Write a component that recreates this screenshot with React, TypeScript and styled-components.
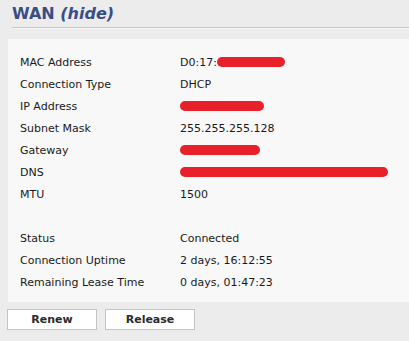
import React from "react";
import styled, { createGlobalStyle } from "styled-components";

const Global = createGlobalStyle`
  html, body { margin: 0; padding: 0; background: #ececec; }
  body { font-family: "DejaVu Sans", Verdana, sans-serif; }
`;

const Page = styled.div`
  width: 409px;
  height: 341px;
  background: #ececec;
  overflow: hidden;
  display: flex;
  flex-direction: column;
`;

const Header = styled.h2`
  margin: 0 0 0 12px;
  padding: 4px 0 4px 0;
  font-family: "DejaVu Sans", Verdana, sans-serif;
  font-size: 16px;
  font-weight: bold;
  color: #3a4d88;
  border-bottom: 1px solid #c8c8c8;
  box-shadow: 0 1px 0 #f6f6f6;
  line-height: 19px;
`;

const Hide = styled.a`
  font-style: italic;
  color: #3a4d88;
  text-decoration: none;
  cursor: pointer;
`;

const Panel = styled.div`
  margin: 11px 0 0 8px;
  background: #f8f8f8;
  padding: 12px 0 9px 12px;
  display: flex;
  flex-direction: column;
`;

const Row = styled.div<{ $gapTop?: boolean }>`
  display: grid;
  grid-template-columns: 160px 1fr;
  height: 22px;
  align-items: center;
  margin-top: ${(p) => (p.$gapTop ? "22px" : "0")};
  font-family: "DejaVu Sans", Verdana, sans-serif;
  font-size: 11px;
  color: #1a1a1a;
`;

const Value = styled.span`
  display: flex;
  align-items: center;
`;

const Redact = styled.span<{ $w: number }>`
  display: inline-block;
  height: 10px;
  width: ${(p) => p.$w}px;
  background: #e8202a;
  border-radius: 5px;
`;

const Buttons = styled.div`
  display: flex;
  gap: 8px;
  margin: 7px 0 0 7px;
`;

const Button = styled.button`
  width: 90px;
  height: 21px;
  background: #ffffff;
  border: 1px solid #c4c4c4;
  font-family: "DejaVu Sans", Verdana, sans-serif;
  font-size: 11px;
  font-weight: bold;
  color: #2a2a2a;
  padding: 0;
`;

export default function App() {
  return (
    <Page>
      <Global />
      <Header>
        WAN <Hide>(hide)</Hide>
      </Header>
      <Panel>
        <Row>
          <span>MAC Address</span>
          <Value>
            D0:17:<Redact $w={68} />
          </Value>
        </Row>
        <Row>
          <span>Connection Type</span>
          <Value>DHCP</Value>
        </Row>
        <Row>
          <span>IP Address</span>
          <Value>
            <Redact $w={84} />
          </Value>
        </Row>
        <Row>
          <span>Subnet Mask</span>
          <Value>255.255.255.128</Value>
        </Row>
        <Row>
          <span>Gateway</span>
          <Value>
            <Redact $w={80} />
          </Value>
        </Row>
        <Row>
          <span>DNS</span>
          <Value>
            <Redact $w={208} />
          </Value>
        </Row>
        <Row>
          <span>MTU</span>
          <Value>1500</Value>
        </Row>
        <Row $gapTop>
          <span>Status</span>
          <Value>Connected</Value>
        </Row>
        <Row>
          <span>Connection Uptime</span>
          <Value>2 days, 16:12:55</Value>
        </Row>
        <Row>
          <span>Remaining Lease Time</span>
          <Value>0 days, 01:47:23</Value>
        </Row>
      </Panel>
      <Buttons>
        <Button>Renew</Button>
        <Button>Release</Button>
      </Buttons>
    </Page>
  );
}
